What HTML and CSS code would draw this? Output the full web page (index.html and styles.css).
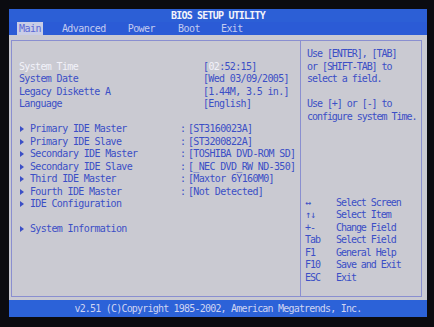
FILE: index.html
```html
<!DOCTYPE html>
<html>
<head>
<meta charset="utf-8">
<link rel="stylesheet" href="styles.css">
</head>
<body>
<div class="screen">
  <div class="title">BIOS SETUP UTILITY</div>
  <div class="menu">
    <span class="tab active">Main</span>
    <span class="tab t-adv">Advanced</span>
    <span class="tab t-pow">Power</span>
    <span class="tab t-boot">Boot</span>
    <span class="tab t-exit">Exit</span>
  </div>
  <div class="main">
    <div class="frame">
      <div class="left">
        <div class="row"><span class="label sel">System Time</span><span class="val v1">[<span class="sel">02</span>:52:15]</span></div>
        <div class="row"><span class="label">System Date</span><span class="val v1">[Wed 03/09/2005]</span></div>
        <div class="row"><span class="label">Legacy Diskette A</span><span class="val v1">[1.44M, 3.5 in.]</span></div>
        <div class="row"><span class="label">Language</span><span class="val v1">[English]</span></div>
        <div class="row gap"></div>
        <div class="row"><span class="label sub"><i class="arrow"></i>Primary IDE Master</span><span class="colon">:</span><span class="val">[ST3160023A]</span></div>
        <div class="row"><span class="label sub"><i class="arrow"></i>Primary IDE Slave</span><span class="colon">:</span><span class="val">[ST3200822A]</span></div>
        <div class="row"><span class="label sub"><i class="arrow"></i>Secondary IDE Master</span><span class="colon">:</span><span class="val">[TOSHIBA DVD-ROM SD]</span></div>
        <div class="row"><span class="label sub"><i class="arrow"></i>Secondary IDE Slave</span><span class="colon">:</span><span class="val">[_NEC DVD_RW ND-350]</span></div>
        <div class="row"><span class="label sub"><i class="arrow"></i>Third IDE Master</span><span class="colon">:</span><span class="val">[Maxtor 6Y160M0]</span></div>
        <div class="row"><span class="label sub"><i class="arrow"></i>Fourth IDE Master</span><span class="colon">:</span><span class="val">[Not Detected]</span></div>
        <div class="row"><span class="label sub"><i class="arrow"></i>IDE Configuration</span></div>
        <div class="row gap"></div>
        <div class="row"><span class="label sub"><i class="arrow"></i>System Information</span></div>
      </div>
      <div class="right">
        <div class="help">
          <div class="hl">Use [ENTER], [TAB]</div>
          <div class="hl">or [SHIFT-TAB] to</div>
          <div class="hl">select a field.</div>
          <div class="hl">&nbsp;</div>
          <div class="hl">Use [+] or [-] to</div>
          <div class="hl">configure system Time.</div>
        </div>
        <div class="keys">
          <div class="krow"><span class="key">↔</span><span>Select Screen</span></div>
          <div class="krow"><span class="key">↑↓</span><span>Select Item</span></div>
          <div class="krow"><span class="key">+-</span><span>Change Field</span></div>
          <div class="krow"><span class="key">Tab</span><span>Select Field</span></div>
          <div class="krow"><span class="key">F1</span><span>General Help</span></div>
          <div class="krow"><span class="key">F10</span><span>Save and Exit</span></div>
          <div class="krow"><span class="key">ESC</span><span>Exit</span></div>
        </div>
      </div>
    </div>
  </div>
  <div class="footer">v2.51 (C)Copyright 1985-2002, American Megatrends, Inc.</div>
</div>
</body>
</html>
```

FILE: styles.css
```css
html, body {
  margin: 0;
  padding: 0;
  background: #0b0b10;
}
body {
  width: 434px;
  height: 327px;
  overflow: hidden;
  font-family: "DejaVu Sans Mono", "Liberation Mono", monospace;
  font-size: 10px;
}
.screen {
  margin: 9px 0 0 9px;
  width: 418px;
}
.title {
  height: 13px;
  line-height: 13px;
  background: #2c5fd6;
  color: #f4f4fa;
  font-weight: bold;
  text-align: center;
  letter-spacing: -0.8px;
}
.menu {
  height: 13px;
  line-height: 13px;
  background: #2b5bd6;
  display: flex;
  color: #c3cbf0;
  letter-spacing: -0.55px;
}
.tab {
  padding: 0 2px;
}
.tab.active {
  margin-left: 8px;
  background: #c9cde6;
  color: #5a68d6;
}
.t-adv { margin-left: 17px; }
.t-pow { margin-left: 18px; }
.t-boot { margin-left: 19px; }
.t-exit { margin-left: 17px; }
.main {
  background: #cacad2;
  height: 265px;
  box-sizing: border-box;
  padding: 5px 5px 3px 2px;
}
.frame {
  height: 257px;
  box-sizing: border-box;
  border: 1px solid #8a8fd0;
  display: flex;
}
.left {
  border-right: 1px solid #8a8fd0;
  padding: 19.5px 0 0 7px;
  width: 281px;
  flex: none;
  color: #3b4fc6;
  letter-spacing: -0.65px;
}
.row {
  height: 12.5px;
  line-height: 12.5px;
  display: flex;
  white-space: pre;
}
.label {
  width: 161px;
  flex: none;
}
.label.sub {
  display: flex;
  align-items: center;
  padding-left: 1px;
  box-sizing: border-box;
}
.arrow {
  width: 0;
  height: 0;
  border-left: 4px solid #3b4fc6;
  border-top: 3px solid transparent;
  border-bottom: 3px solid transparent;
  margin-right: 6px;
}
.sel {
  color: #f2f2fa;
}
.colon {
  width: 8px;
}
.v1 {
  margin-left: 23px;
}
.right {
  flex: 1;
  display: flex;
  flex-direction: column;
  justify-content: space-between;
  padding: 7px 0 12px 0;
  color: #3b4fc6;
  letter-spacing: -1.05px;
}
.help {
  padding-left: 6px;
}
.hl {
  height: 12.5px;
  line-height: 12.5px;
  white-space: nowrap;
}
.keys {
  padding-left: 4px;
}
.krow {
  display: flex;
  height: 12.5px;
  line-height: 12.5px;
  white-space: nowrap;
}
.key {
  width: 31px;
  flex: none;
}
.footer {
  height: 17px;
  line-height: 17px;
  background: #2c62d8;
  color: #cfd4f2;
  text-align: center;
  letter-spacing: -0.8px;
}
```
